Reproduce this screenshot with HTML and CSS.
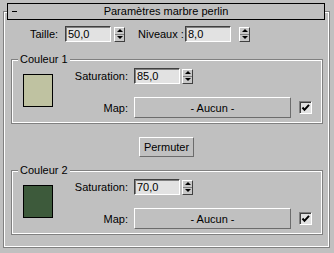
FILE: index.html
```html
<!DOCTYPE html>
<html lang="fr">
<head>
  <meta charset="UTF-8">
  <meta name="viewport" content="width=device-width, initial-scale=1.0">
  <title>Paramètres marbre perlin</title>
  <link rel="stylesheet" href="styles.css">
</head>
<body>

  <div class="rollout">

    <div class="rollout-title">
      <span class="toggle"></span>
      <span class="title-text">Paramètres marbre perlin</span>
    </div>

    <div class="top-row">
      <span class="label label-taille">Taille:</span>
      <input class="field" type="text" value="50,0">
      <span class="spinner"><span class="arrow-up"></span><span class="arrow-down"></span></span>
      <span class="label label-niveaux">Niveaux :</span>
      <input class="field" type="text" value="8,0">
      <span class="spinner spinner-wide"><span class="arrow-up"></span><span class="arrow-down"></span></span>
    </div>

    <fieldset class="group">
      <legend>Couleur 1</legend>
      <div class="group-body">
        <div class="swatch swatch-light"></div>
        <div class="controls">
          <div class="ctrl-row">
            <span class="ctrl-label">Saturation:</span>
            <input class="field" type="text" value="85,0">
            <span class="spinner"><span class="arrow-up"></span><span class="arrow-down"></span></span>
          </div>
          <div class="ctrl-row map-row">
            <span class="ctrl-label">Map:</span>
            <button class="btn map-btn">- Aucun -</button>
            <span class="check">
              <svg width="9" height="9" viewBox="0 0 9 9"><path d="M1.5 4.5 L3.5 6.8 L8 1.8" fill="none" stroke="#000" stroke-width="2"/></svg>
            </span>
          </div>
        </div>
      </div>
    </fieldset>

    <button class="btn swap-btn">Permuter</button>

    <fieldset class="group group-second">
      <legend>Couleur 2</legend>
      <div class="group-body">
        <div class="swatch swatch-dark"></div>
        <div class="controls">
          <div class="ctrl-row">
            <span class="ctrl-label">Saturation:</span>
            <input class="field" type="text" value="70,0">
            <span class="spinner"><span class="arrow-up"></span><span class="arrow-down"></span></span>
          </div>
          <div class="ctrl-row map-row">
            <span class="ctrl-label">Map:</span>
            <button class="btn map-btn">- Aucun -</button>
            <span class="check">
              <svg width="9" height="9" viewBox="0 0 9 9"><path d="M1.5 4.5 L3.5 6.8 L8 1.8" fill="none" stroke="#000" stroke-width="2"/></svg>
            </span>
          </div>
        </div>
      </div>
    </fieldset>

  </div>

</body>
</html>
```

FILE: styles.css
```css
* {
  box-sizing: border-box;
}

body {
  margin: 0;
  background-color: #c0c0c0;
  font-family: "Liberation Sans", Arial, sans-serif;
  font-size: 11px;
  color: #000;
}

/* outer rollout frame */
.rollout {
  margin: 11px 0 0 3px;
  width: 327px;
  height: 237px;
  border: 1px solid #808080;
  box-shadow: inset 0 0 0 1px #fff;
}

.rollout-title {
  display: flex;
  align-items: center;
  margin: -9px 0 0 3px;
  width: 318px;
  height: 17px;
  border: 1px solid #000;
  background-color: #c0c0c0;
}

.toggle {
  width: 5px;
  height: 1px;
  margin-left: 4px;
  background-color: #000;
}

.title-text {
  flex: 1;
  text-align: center;
  padding-right: 9px;
  line-height: 15px;
}

/* first row: Taille / Niveaux */
.top-row {
  display: flex;
  align-items: center;
  height: 16px;
  margin-top: 6px;
  padding-left: 26px;
}

.label-taille {
  width: 35px;
}

.label-niveaux {
  width: 47px;
  margin-left: 13px;
}

.field {
  width: 46px;
  height: 16px;
  margin: 0;
  padding: 0 2px;
  border: 1px solid;
  border-color: #404040 #fff #fff #404040;
  box-shadow: inset 1px 1px 0 #808080;
  background-color: #e2e2e2;
  font: inherit;
  color: #000;
  outline: none;
}

.spinner {
  display: flex;
  flex-direction: column;
  width: 11px;
  height: 15px;
  margin-left: 3px;
  border: 1px solid;
  border-color: #fff #404040 #404040 #fff;
  background-color: #c8c8c8;
}

.spinner-wide {
  margin-left: 8px;
}

.arrow-up,
.arrow-down {
  flex: 1;
  display: flex;
  align-items: center;
  justify-content: center;
}

.arrow-up {
  border-bottom: 1px solid #808080;
}

.arrow-up::after,
.arrow-down::after {
  content: "";
  border-left: 3px solid transparent;
  border-right: 3px solid transparent;
}

.arrow-up::after {
  border-bottom: 3px solid #000;
}

.arrow-down::after {
  border-top: 3px solid #000;
}

/* colour groups */
.group {
  width: 312px;
  margin: 11px 0 0 7px;
  padding: 0;
  min-width: 0;
  border: 1px solid #808080;
  box-shadow: inset 0 0 0 1px #fff;
}

.group legend {
  margin-left: 6px;
  padding: 0 2px;
  line-height: 13px;
  background-color: #c0c0c0;
}

.group-second {
  margin-top: 7px;
}

.group-body {
  display: flex;
  align-items: flex-start;
  padding-bottom: 5px;
}

.swatch {
  width: 30px;
  height: 33px;
  margin: 8px 0 0 11px;
  border: 1px solid #000;
}

.swatch-light {
  background-color: #bfc2a1;
}

.swatch-dark {
  background-color: #3d5a3b;
}

.controls {
  padding-top: 2px;
}

.ctrl-row {
  display: flex;
  align-items: center;
  height: 16px;
}

.ctrl-row .spinner {
  margin-left: 2px;
}

.ctrl-label {
  width: 75px;
  margin-right: 6px;
  text-align: right;
}

.map-row {
  height: 21px;
  margin-top: 13px;
}

.btn {
  margin: 0;
  padding: 0;
  border: 1px solid;
  border-color: #fff #6c6c6c #6c6c6c #fff;
  background-color: #c0c0c0;
  font: inherit;
  color: #000;
}

.map-btn {
  width: 157px;
  height: 21px;
}

.check {
  display: flex;
  align-items: center;
  justify-content: center;
  width: 13px;
  height: 13px;
  margin-left: 8px;
  border: 1px solid;
  border-color: #808080 #fff #fff #808080;
  box-shadow: inset 1px 1px 0 #404040;
  background-color: #e2e2e2;
}

.swap-btn {
  display: block;
  width: 55px;
  height: 20px;
  margin: 13px auto 0;
}
```
